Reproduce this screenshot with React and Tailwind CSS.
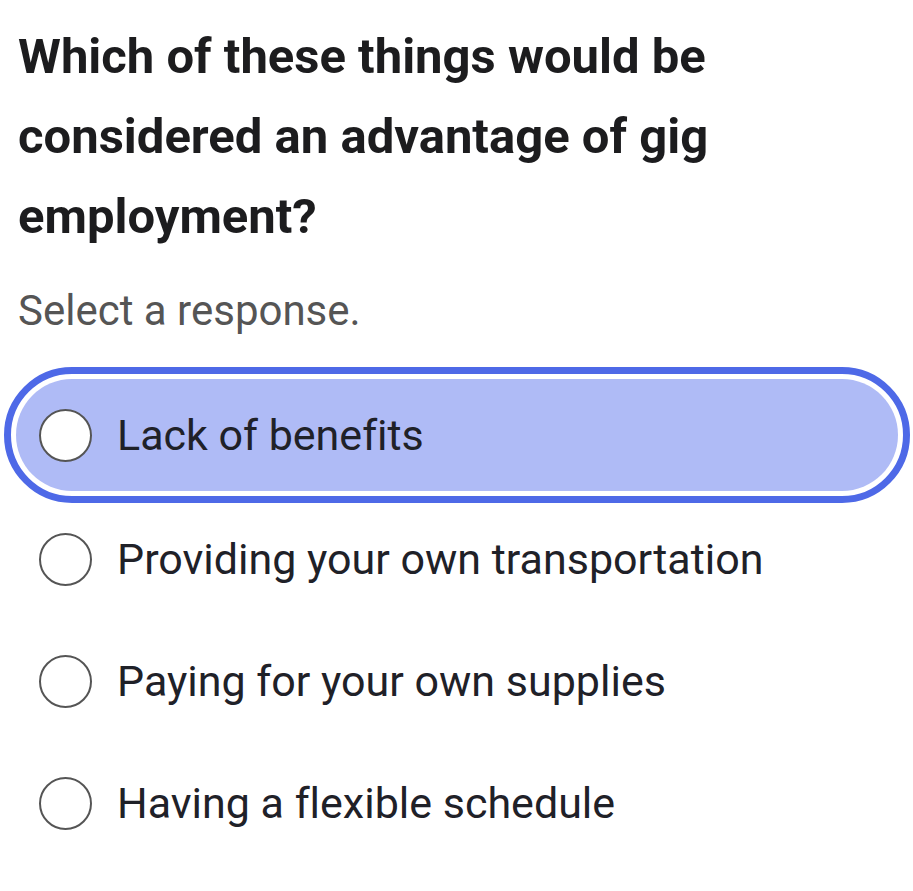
const options = [
  "Lack of benefits",
  "Providing your own transportation",
  "Paying for your own supplies",
  "Having a flexible schedule",
];

const Radio = () => (
  <span className="block w-[53px] h-[53px] shrink-0 rounded-full border-[2.5px] border-[#555] bg-white" />
);

export default function App() {
  return (
    <div
      className="w-[913px] h-[891px] bg-white pt-[17px] [font-variant-ligatures:none]"
      style={{ fontFamily: "Roboto, 'Liberation Sans', sans-serif" }}
    >
      <h1 className="pl-[18px] pr-4 text-[49px] leading-[80px] font-bold text-[#1c1c1e]">
        Which of these things would be
        <br />
        considered an advantage of gig
        <br />
        employment?
      </h1>
      <p className="pl-[18px] mt-[29px] text-[42px] leading-[50px] text-[#555]">
        Select a response.
      </p>

      <div className="mt-[31px] ml-[4px] w-[906px]">
        <div className="rounded-full border-[7px] border-[#4e69e7] bg-white p-[5px]">
          <div className="h-[112px] rounded-full bg-[#afbbf6] flex items-center pl-[23px] gap-[25px]">
            <Radio />
            <span className="text-[43px] text-[#1f2128]">{options[0]}</span>
          </div>
        </div>
        <div className="-mt-[5px]">
          {options.slice(1).map((o) => (
            <div key={o} className="h-[122px] flex items-center pl-[35px] gap-[25px]">
              <Radio />
              <span className="text-[43px] text-[#1f2128]">{o}</span>
            </div>
          ))}
        </div>
      </div>
    </div>
  );
}
